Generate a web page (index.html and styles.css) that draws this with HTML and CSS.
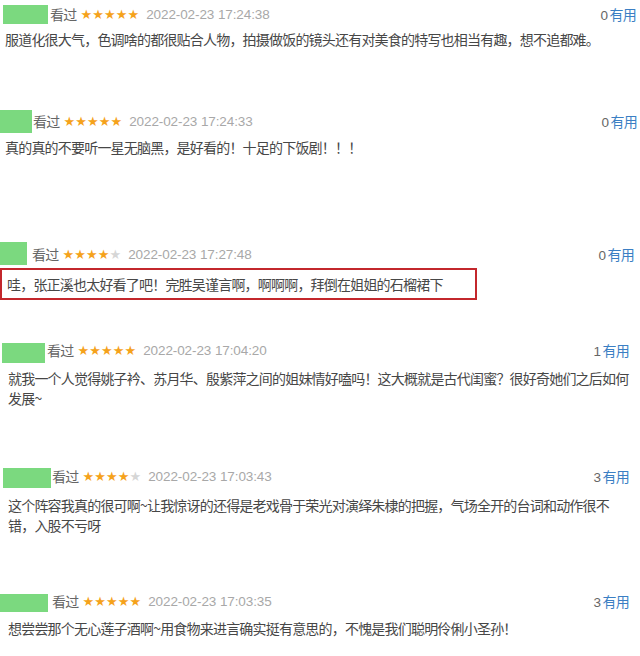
FILE: index.html
```html
<!DOCTYPE html>
<html lang="zh-CN">
<head>
    <meta charset="UTF-8">
    <meta name="viewport" content="width=device-width, initial-scale=1.0">
    <title>短评</title>
    <link rel="stylesheet" href="styles.css">
</head>
<body>
    <div class="review r1">
        <div class="review-head">
            <span class="avatar"></span>
            <span class="status">看过</span>
            <span class="stars">★★★★★</span>
            <span class="time">2022-02-23 17:24:38</span>
            <span class="votes"><span class="count">0</span> <span class="useful">有用</span></span>
        </div>
        <p class="review-text">服道化很大气，色调啥的都很贴合人物，拍摄做饭的镜头还有对美食的特写也相当有趣，想不追都难。</p>
    </div>

    <div class="review r2">
        <div class="review-head">
            <span class="avatar"></span>
            <span class="status">看过</span>
            <span class="stars">★★★★★</span>
            <span class="time">2022-02-23 17:24:33</span>
            <span class="votes"><span class="count">0</span> <span class="useful">有用</span></span>
        </div>
        <p class="review-text">真的真的不要听一星无脑黑，是好看的！十足的下饭剧！！！</p>
    </div>

    <div class="review r3">
        <div class="review-head">
            <span class="avatar"></span>
            <span class="status">看过</span>
            <span class="stars">★★★★<i>★</i></span>
            <span class="time">2022-02-23 17:27:48</span>
            <span class="votes"><span class="count">0</span> <span class="useful">有用</span></span>
        </div>
        <p class="review-text boxed">哇，张正溪也太好看了吧！完胜吴谨言啊，啊啊啊，拜倒在姐姐的石榴裙下</p>
    </div>

    <div class="review r4">
        <div class="review-head">
            <span class="avatar"></span>
            <span class="status">看过</span>
            <span class="stars">★★★★★</span>
            <span class="time">2022-02-23 17:04:20</span>
            <span class="votes"><span class="count">1</span> <span class="useful">有用</span></span>
        </div>
        <p class="review-text">就我一个人觉得姚子衿、苏月华、殷紫萍之间的姐妹情好嗑吗！这大概就是古代闺蜜？很好奇她们之后如何<br>发展~</p>
    </div>

    <div class="review r5">
        <div class="review-head">
            <span class="avatar"></span>
            <span class="status">看过</span>
            <span class="stars">★★★★<i>★</i></span>
            <span class="time">2022-02-23 17:03:43</span>
            <span class="votes"><span class="count">3</span> <span class="useful">有用</span></span>
        </div>
        <p class="review-text">这个阵容我真的很可啊~让我惊讶的还得是老戏骨于荣光对演绎朱棣的把握，气场全开的台词和动作很不<br>错，入股不亏呀</p>
    </div>

    <div class="review r6">
        <div class="review-head">
            <span class="avatar"></span>
            <span class="status">看过</span>
            <span class="stars">★★★★★</span>
            <span class="time">2022-02-23 17:03:35</span>
            <span class="votes"><span class="count">3</span> <span class="useful">有用</span></span>
        </div>
        <p class="review-text">想尝尝那个无心莲子酒啊~用食物来进言确实挺有意思的，不愧是我们聪明伶俐小圣孙！</p>
    </div>
</body>
</html>
```

FILE: styles.css
```css
body {
    margin: 0;
    background-color: #fff;
    font-family: "Noto Sans CJK SC", sans-serif;
    color: #444;
}
.review-head {
    display: flex;
    align-items: center;
    height: 24px;
    font-size: 14px;
}
.avatar {
    flex: none;
    background-color: #7bd97f;
}
.status {
    color: #666;
    letter-spacing: -0.8px;
}
.stars {
    margin-left: 4px;
    font-family: "DejaVu Sans", sans-serif;
    font-size: 13px;
    letter-spacing: 0.1px;
    color: #f5a21b;
}
.stars i {
    font-style: normal;
    color: #d6d6d6;
}
.time {
    margin-left: 7px;
    font-family: "Liberation Sans", sans-serif;
    font-size: 13.5px;
    letter-spacing: -0.1px;
    color: #a8a8a8;
}
.votes {
    margin-left: auto;
    letter-spacing: -0.8px;
}
.count {
    font-family: "Liberation Sans", sans-serif;
    font-size: 13.5px;
    color: #666;
}
.useful {
    color: #3b7fc4;
}
.review-text {
    margin: 0;
    padding-left: 5px;
    font-size: 14px;
    line-height: 20px;
    letter-spacing: -0.8px;
    color: #474747;
}
.review-text.boxed {
    width: 477px;
    box-sizing: border-box;
    padding: 4px 5px;
    border: 2px solid #c3272c;
}

/* each block comes from a separate capture, so offsets differ a bit */
.r1 { padding-top: 2px; }
.r1 .avatar { width: 45px; height: 19px; margin: 0 2px 0 3px; }
.r1 .votes { margin-right: 4px; }
.r1 .review-text { margin-top: 3px; }

.r2 { margin-top: 60px; }
.r2 .avatar { width: 32px; height: 23px; margin-right: 1px; }
.r2 .votes { margin-right: 3px; }
.r2 .review-text { margin-top: 4px; }

.r3 { margin-top: 85px; }
.r3 .avatar { width: 27px; height: 23px; margin-right: 5px; align-self: flex-start; }
.r3 .votes { margin-right: 6px; }
.r3 .review-text { margin-top: 2px; }

.r4 { margin-top: 38px; }
.r4 .avatar { width: 43px; height: 20px; margin: 5px 2px 0 2px; }
.r4 .votes { margin-right: 11px; }
.r4 .review-text { margin-top: 6px; padding-left: 8px; }

.r5 { margin-top: 56px; }
.r5 .avatar { width: 48px; height: 20px; margin: 4px 1px 0 3px; }
.r5 .votes { margin-right: 11px; }
.r5 .review-text { margin-top: 7px; padding-left: 8px; }

.r6 { margin-top: 54px; }
.r6 .avatar { width: 48px; height: 18px; margin: 4px 4px 0 0; }
.r6 .votes { margin-right: 11px; }
.r6 .review-text { margin-top: 5px; padding-left: 8px; }
```
